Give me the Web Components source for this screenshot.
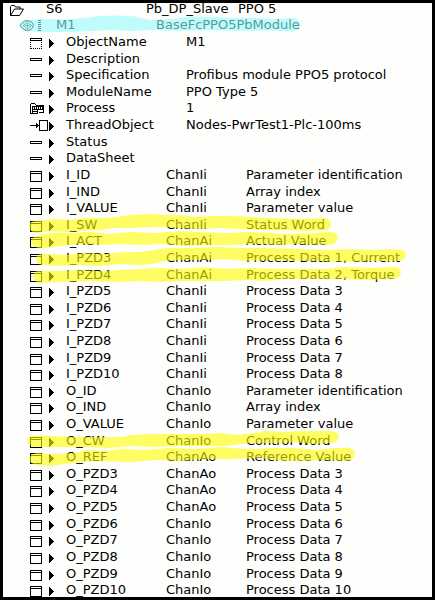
<!DOCTYPE html>
<html lang="en"><head><meta charset="utf-8"><title>Module objects</title>
<style>body{margin:0}</style></head><body>
<object-browser></object-browser>
<script>
const ICONS = {
  folder: '<path d="M10.5 20.500V11.500l1-1h3l1 1.500h4.500v2M10.500 20.500h9l4-6.500h-9z"/>',
  module: '<path d="M20 14.500L25 9.800h4.500l2.500 1.700 1.500 3-1.500 3-2.500 1.700H25z"/><path d="M23.500 14.500l4-3.500 4 3.500-4 3.500z" stroke-dasharray="1.500 .7"/><path d="M25.500 14.500h4M27.500 12.500v4" stroke-dasharray="1 .5"/><path d="M38 9.500h3m-3 2h3m-3 2h3m-3 2h3m-3 2h3m-3 2h3"/>',
  attr: '<path d="M30 10.500h12M30 12.500h12M30.500 10v3M41.500 10v3"/><path d="M30.500 14v7m11-7v7M31 20.500h11" stroke-dasharray="1 1"/>',
  bar: '<path d="M30.500 13.500h11v2h-11z"/>',
  win: '<path d="M30.500 10.500h11v10h-11zM31 12.500h11"/>',
  process: '<path d="M31 9.500h4M30.500 10v10M35 10.500h1M36 11.500h8M43.500 11v8M39 18.500h5M30 19.500h8M32.500 12v7.500M37.500 15v5M33 12.500h10M33 15.500h10M33 17.500h5"/><path d="M34 14.500h9M34 13.500h9" stroke-dasharray="1 1"/><path d="M40.500 12v4"/>',
  thread: '<path d="M39.500 9.500h8v10h-8zM30 14.500h9M36.500 12v5M37.500 13v3"/>'
};

class TreeIcon extends HTMLElement {
  connectedCallback() {
    const kind = this.getAttribute('kind');
    const arrow = kind !== 'folder' && kind !== 'module';
    const soft = kind === 'folder' || kind === 'module';
    this.attachShadow({mode: 'open'}).innerHTML = `
      <style>:host{display:block;width:56px;height:17px}svg{display:block;overflow:visible}</style>
      <svg width="56" height="17" viewBox="0 5 56 17" fill="none" stroke="#000" shape-rendering="${soft ? 'auto' : 'crispEdges'}">
      ${ICONS[kind]}${arrow ? '<path stroke="none" fill="#000" d="M49 11h1v1h1v1h1v1h1v1h1v1h-1v1h-1v1h-1v1h-1v1h-1z"/>' : ''}</svg>`;
  }
}
customElements.define('tree-icon', TreeIcon);

class TreeRow extends HTMLElement {
  connectedCallback() {
    this.attachShadow({mode: 'open'}).innerHTML = `
      <style>:host{display:grid;grid-template-columns:var(--cols);line-height:17px;white-space:nowrap}
      tree-icon{grid-area:1/1}</style>
      <tree-icon kind="${this.getAttribute('kind')}"></tree-icon><slot></slot>`;
  }
}
customElements.define('tree-row', TreeRow);

class MarkerStrokes extends HTMLElement {
  connectedCallback() {
    this.attachShadow({mode: 'open'}).innerHTML = `
      <style>:host{position:absolute;inset:0;pointer-events:none}svg{display:block}</style>
      <svg width="435" height="600"><g fill="#94fafc" opacity=".6">
      <path d="M19 25Q20 20 27 20L45 19 65 19.500 84 18 100 16 120 15.500 135 16.500 149 20 175 19 190 16.500 215 17 235 18 260 18 275 19 293 18Q299 19 300 24 298 31 293 31.500L270 30.500 240 31 210 30 180 31 150 30 130 31 110 30 90 31 70 32 50 32 30 31.500Q20 31 19 25z"/></g>
      <g fill="#ff0" opacity=".6">
      <path d="M29 227Q29 221 36 221L53 219 70 220 85 218 100 218 118 217 130 215 150 214 165 215 180 215 195 217 215 216 230 216 250 217 270 218 300 219 325 218Q331 219 331 225 329 231 324 230.500L300 231 285 230 260 230 240 229 220 228 200 229 180 228 165 227 150 227 130 228 115 228 100 230 80 231 65 232 50 231 36 233Q30 232 29 227z"/>
      <path d="M31 242Q31 237 37 236L50 233 70 233 90 232 110 234 130 232 155 233 180 231 200 232 225 233 250 232 270 233 290 234 315 233 332 232Q338 233 338 238 336 245 329 245L300 244 280 245 255 244 230 245 205 245 185 246 160 244 140 245 120 244 100 245 80 244 60 246 45 248Q32 249 31 242z"/>
      <path d="M36 259Q36 254 42 254L65 255 85 253 105 254 125 252 140 252 155 250 167 248 190 248 215 247 240 248 270 248 300 249 325 250 345 249 370 250 390 249 401 250Q406 251 406 255 405 261 398 261L370 261 350 262 320 261 295 261 270 260 245 261 225 259 200 260 180 260 165 261 152 264 140 265 120 264 100 266 80 265 60 266 42 265Q36 264 36 259z"/>
      <path d="M33 276Q33 271 39 271L60 271 80 270 100 271 120 270 140 269 160 268 180 269 205 267 225 269 250 268 275 269 300 269 325 269 345 267 370 268 395 267Q401 268 401 273 399 279 393 279L365 280 340 279 315 279 285 279 265 281 245 280 225 281 200 281 180 281 160 282 140 281 120 282 90 281 60 282 40 283Q34 282 33 276z"/>
      <path d="M27 441Q28 436 35 435.500L50 436 75 437 100 437 124 437 130 435 150 434 175 434 200 434 220 433 235 435 255 433 265 431 285 432 305 431 332 431Q339 432 339 437 337 443 330 443L310 444 295 442 275 443 255 443 240 444 225 446 200 446 180 446 155 447 130 446 110 448 85 447 60 447 35 447Q28 446 27 441z"/>
      <path d="M29 459Q30 454 37 453L50 454 75 453 85 450 105 451 120 449 145 450 170 448 195 449 220 447 245 449 270 448 295 448 315 450 335 448 349 448Q355 449 355 454 354 461 347 461L325 460 305 461 285 461 260 458 230 459 205 459 180 461 155 460 130 462 100 461 80 462 65 464 50 466 37 465Q30 464 29 459z"/></g></svg>`;
  }
}
customElements.define('marker-strokes', MarkerStrokes);

class ObjectBrowser extends HTMLElement {
  connectedCallback() {
    const rows = [
      ['folder','S6','Pb_DP_Slave','PPO 5','46px 100px 92px 1fr'],
      ['module','M1','BaseFcPPO5PbModule','','56px 100px 1fr'],
      ...[['attr','ObjectName','M1'],['bar','Description',''],['bar','Specification','Profibus module PPO5 protocol'],
      ['bar','ModuleName','PPO Type 5'],['process','Process','1'],['thread','ThreadObject','Nodes-PwrTest1-Plc-100ms'],
      ['bar','Status',''],['bar','DataSheet','']].map(r => [...r,'','66px 120px 1fr'])
    ];
    for (const [p, c] of [['I','ChanIi'],['O','ChanIo']]) {
      const a = p === 'I' ? 'ChanAi' : 'ChanAo';
      const chan = (n, t, d) => rows.push(['win', p + '_' + n, t, d, '66px 100px 80px 1fr']);
      chan('ID', c, 'Parameter identification');
      chan('IND', c, 'Array index');
      chan('VALUE', c, 'Parameter value');
      chan(p === 'I' ? 'SW' : 'CW', c, p === 'I' ? 'Status Word' : 'Control Word');
      chan(p === 'I' ? 'ACT' : 'REF', a, p === 'I' ? 'Actual Value' : 'Reference Value');
      // Input process data is numbered two below its channel; output data shares the channel number.
      for (let i = 3; i <= 10; i++) {
        const analog = p === 'I' ? i < 5 : i < 6;
        const extra = p === 'I' ? {3: ', Current', 4: ', Torque'}[i] || '' : '';
        chan('PZD' + i, analog ? a : c, 'Process Data ' + (p === 'I' ? i - 2 : i) + extra);
      }
    }
    // Whole-pixel row heights that average to the fractional pitch.
    const pitch = 16.61;
    const html = rows.map(([k, a, b, c, cols], i) => {
      const h = Math.round(12.8 + (i + 1) * pitch) - Math.round(12.8 + i * pitch);
      return `<tree-row kind="${k}" style="--cols:${cols};height:${h}px"><span style="grid-area:1/2">${a}</span><span style="grid-area:1/3">${b}</span>${c ? `<span style="grid-area:1/4">${c}</span>` : ''}</tree-row>`;
    }).join('');
    this.attachShadow({mode: 'open'}).innerHTML = `
      <style>:host{display:block;position:relative;box-sizing:border-box;width:435px;height:600px;background:#fefefc;color:#000;overflow:hidden;font:13px "DejaVu Sans",sans-serif}
      main{height:600px;overflow:hidden}
      .frame{position:absolute;inset:0;border:3px solid #000}</style>
      <main>${html}</main><marker-strokes></marker-strokes><div class="frame"></div>`;
  }
}
customElements.define('object-browser', ObjectBrowser);
</script></body></html>
